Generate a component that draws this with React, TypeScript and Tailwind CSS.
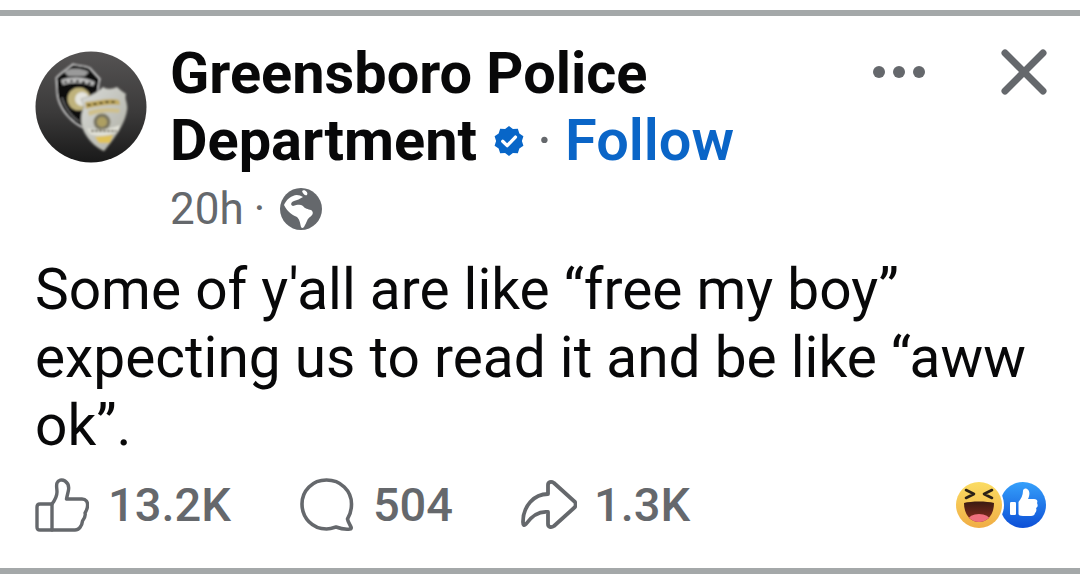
import React from 'react';

const GREY = '#65686c';

// Avatar art: two overlapping police badges on a dark disc
const Avatar = () => (
  <svg width="112" height="112" viewBox="0 0 112 112" className="shrink-0">
    <defs>
      <linearGradient id="disc" x1="0" y1="0" x2="0" y2="1">
        <stop offset="0" stopColor="#555353" />
        <stop offset="0.55" stopColor="#3b3a3a" />
        <stop offset="1" stopColor="#191919" />
      </linearGradient>
      <linearGradient id="silver" x1="0" y1="0" x2="1" y2="1">
        <stop offset="0" stopColor="#d9dbd8" />
        <stop offset="1" stopColor="#aeaea3" />
      </linearGradient>
      <filter id="soft">
        <feGaussianBlur stdDeviation="0.8" />
      </filter>
    </defs>
    <circle cx="56" cy="56" r="55.5" fill="url(#disc)" />
    <g filter="url(#soft)">
      <path d="M38 13 C43 15 50 14 55 17 L65 28 C63 34 64 38 62 44 L48 77 C38 72 27 62 23 48 C21 40 22 32 21 27 C25 22 32 18 38 13 Z" fill="#0a0a0a" stroke="#e6e6e6" strokeWidth="1.2" />
      <path d="M29 21 C36 16 46 17 54 21 L50 25 L33 25 Z" fill="#9a9a9a" />
      <path d="M26 29 C36 25 49 25 60 31 L58 35 C48 31 37 31 28 34 Z" fill="#bdbdbd" />
      <path d="M29 31 h3 M35 30 h3 M41 30 h3 M47 31 h3 M53 32 h3" stroke="#111" strokeWidth="2" />
      <circle cx="44" cy="48" r="11.5" fill="#bfb27c" />
      <circle cx="47" cy="48" r="7" fill="#e4e4de" />
      <path d="M27 47 C30 56 36 66 45 71" fill="none" stroke="#8d8d8d" strokeWidth="1.4" strokeDasharray="2 1" />
      <path d="M68 36 C72 39 78 38 82 36 C85 39 88 41 91 43 C89 48 93 52 92 59 C90 72 82 84 69 100 C60 96 52 88 48 78 C45 70 46 62 49 56 C48 52 47 50 46 48 C53 46 62 42 68 36 Z" fill="url(#silver)" stroke="#8f8f86" strokeWidth="0.6" />
      <path d="M50 51 C60 51 72 46 84 49 L85 54 C72 53 60 56 51 58 Z" fill="#c2ab62" />
      <path d="M52 54 h4 M58 53 h4 M64 52 h4 M70 51 h4 M76 51 h4" stroke="#4a3e1b" strokeWidth="1.8" />
      <path d="M53 60 C62 57 74 56 85 58 L84 62 C72 60 62 62 54 65 Z" fill="#cfc08c" />
      <circle cx="67" cy="71" r="8.5" fill="#7a7660" />
      <circle cx="67" cy="71" r="5" fill="#ad9f62" />
      <path d="M52 77 C60 80 74 79 85 74 L83 81 C74 85 62 86 55 83 Z" fill="#e2e2d8" />
      <path d="M56 80 h26" stroke="#4b4430" strokeWidth="1.6" strokeDasharray="3 1" />
      <path d="M60 86 L78 84 L75 92 L64 92 Z" fill="#e0c25a" />
    </g>
  </svg>
);

const Verified = () => (
  <svg width="36" height="36" viewBox="0 0 24 24" className="shrink-0">
    <path d="M12 2 L14.6 4 L17.9 3.9 L18.9 7 L21.6 8.9 L20.6 12 L21.6 15.1 L18.9 17 L17.9 20.1 L14.6 20 L12 22 L9.4 20 L6.1 20.1 L5.1 17 L2.4 15.1 L3.4 12 L2.4 8.9 L5.1 7 L6.1 3.9 L9.4 4 Z" fill="#0866c8" />
    <path d="M7.8 12.2 L10.8 15.1 L16.3 9.4" fill="none" stroke="#fff" strokeWidth="2.2" strokeLinecap="round" strokeLinejoin="round" />
  </svg>
);

const Globe = () => (
  <svg width="42" height="42" viewBox="0 0 42 42" className="shrink-0">
    <circle cx="21" cy="21" r="21" fill={GREY} />
    <path d="M4 17 C6 13 8 10 13 8 C16 6 20 7 23 9 C20 11 17 12 14 13 C11 14 10 17 13 18 C17 17 20 16 23 18 C25 21 28 21 31 22 C34 24 33 27 30 29 C27 31 27 34 25 37 C24 40 22 41 21 39 C20 35 20 32 17 29 C13 27 8 25 4 17 Z" fill="#fff" />
    <path d="M24 2 C27 3 28 5 27 7 C25 8 23 6 22 3 Z" fill="#fff" />
  </svg>
);

const LikeOutline = () => (
  <svg width="54" height="54" viewBox="0 0 54 54" fill="none" stroke={GREY} strokeWidth="3.4" strokeLinejoin="round" strokeLinecap="round" className="shrink-0">
    <path d="M2 29 Q2 26 5 26 H17 V52 H5 Q2 52 2 49 Z" />
    <path d="M17 26 C20 22 22 18 22 14 C22 10 21 8 22 5 C23 2 27 1 30 3 C33 5 34 9 33.5 12 C33 15 32 18 31.5 21 H47 C51 21 53 24 52.5 28 C52.5 31 51 33 50 35 C51 38 49 41 47.5 43 C47 48 44 52 40 52 H17" />
  </svg>
);

const CommentOutline = () => (
  <svg width="54" height="54" viewBox="0 0 54 54" fill="none" stroke={GREY} strokeWidth="3.6" strokeLinejoin="round" className="shrink-0">
    <path d="M26.5 2 C12.5 2 2 12.5 2 26 C2 40 12.5 51 26.5 51 C30 51 33 50 36 49 C40 50.5 46 51.5 50 51 C51 51 51.5 50 51 49 C50 47 48 44 47.5 41 C50 37 51.5 32 51.5 26 C51.5 12.5 40.5 2 26.5 2 Z" />
  </svg>
);

const ShareOutline = () => (
  <svg width="56" height="50" viewBox="0 0 56 50" fill="none" stroke={GREY} strokeWidth="3.8" strokeLinejoin="round" strokeLinecap="round" className="shrink-0">
    <path d="M27 5 C27 2 30 1 33 3 L54 22 C55 24 55 25 54 27 L33 46 C30 48 27 47 27 44 V32 C18 31 10 37 5 44 C3 46 2 45 2 42 C2 26 13 14 27 14 Z" />
  </svg>
);

const Reactions = () => (
  <svg width="90" height="46" viewBox="0 0 90 46" className="shrink-0">
    <defs>
      <linearGradient id="haha" x1="0" y1="0" x2="0" y2="1">
        <stop offset="0" stopColor="#fbdc62" />
        <stop offset="1" stopColor="#f0ad45" />
      </linearGradient>
      <linearGradient id="mouth" x1="0" y1="0" x2="0" y2="1">
        <stop offset="0" stopColor="#3a1a12" />
        <stop offset="1" stopColor="#8a2d1e" />
      </linearGradient>
      <linearGradient id="like" x1="0" y1="0" x2="0" y2="1">
        <stop offset="0" stopColor="#35a0fb" />
        <stop offset="1" stopColor="#0d4fd6" />
      </linearGradient>
      <clipPath id="mouthClip">
        <path d="M8 21 C15 19 31 19 38 21 C38 32 32 40 23 40 C14 40 8 32 8 21 Z" />
      </clipPath>
    </defs>
    <circle cx="67" cy="23" r="23" fill="url(#like)" />
    <circle cx="23" cy="23" r="25" fill="#fff" />
    <circle cx="23" cy="23" r="23" fill="url(#haha)" />
    <path d="M8 21 C15 19 31 19 38 21 C38 32 32 40 23 40 C14 40 8 32 8 21 Z" fill="url(#mouth)" />
    <g clipPath="url(#mouthClip)">
      <ellipse cx="23" cy="38" rx="11" ry="6" fill="#ee6f7d" />
    </g>
    <path d="M10 8 L18 12 L10 16 M36 8 L28 12 L36 16" fill="none" stroke="#2b2117" strokeWidth="2.6" strokeLinecap="round" strokeLinejoin="round" />
    <rect x="54" y="20" width="6" height="13" rx="1.2" fill="#fff" />
    <path d="M62.5 20 C65 17 67 13 67 9 C67 7 69 6 71 7 C74 8 74 13 72 17 H78 C81 17 82 19 81 21 C82 23 82 25 80 26 C81 28 80 30 79 31 C79 33 77 34 75 34 H67 C64 34 62.5 33 62.5 32 Z" fill="#fff" />
  </svg>
);

export default function App() {
  return (
    <div className="flex h-[577px] w-[1080px] flex-col overflow-hidden bg-white pt-[10px] pb-[3px] font-['Roboto',sans-serif]">
      <div className="h-[6px] bg-[#a4a8a9]" />

      <div className="flex flex-1 flex-col px-[35px]">
        <header className="flex items-start pt-[35px]">
          <Avatar />
          <div className="ml-[23px] flex-1 -mt-[12px]">
            <h1 className="text-[57.7px] leading-[68px] font-bold text-[#080809]">Greensboro Police</h1>
            <div className="flex items-center text-[57.7px] leading-[67px] font-bold text-[#080809]">
              <span>Department</span>
              <span className="ml-[14px]"><Verified /></span>
              <span className="ml-[10px] font-normal text-[#65686c]">·</span>
              <span className="ml-[13px] font-semibold text-[#0a65c7]">Follow</span>
            </div>
            <div className="mt-[10px] flex items-center text-[44px] leading-[50px] text-[#65686c]">
              <span>20h</span>
              <span className="ml-[10px]">·</span>
              <span className="ml-[15px]"><Globe /></span>
            </div>
          </div>
          <div className="-mt-[2px] -mr-[2px] flex items-center gap-[76px]">
            <svg width="52" height="12" viewBox="0 0 52 12" fill={GREY} className="shrink-0">
              <circle cx="6" cy="6" r="6" />
              <circle cx="26" cy="6" r="6" />
              <circle cx="46" cy="6" r="6" />
            </svg>
            <svg width="46" height="46" viewBox="0 0 46 46" fill="none" stroke={GREY} strokeWidth="7" strokeLinecap="round" className="shrink-0">
              <path d="M4 4 L42 42 M42 4 L4 42" />
            </svg>
          </div>
        </header>

        <p className="mt-[22px] text-[56.8px] leading-[68px] text-[#080809]">
          Some of y'all are like “free my boy”
          <br />
          expecting us to read it and be like “aww
          <br />
          ok”.
        </p>

        <footer className="mt-[18px] flex items-center text-[47px] leading-[54px] font-medium text-[#65686c]">
          <LikeOutline />
          <span className="ml-[19px]">13.2K</span>
          <span className="ml-[69px]"><CommentOutline /></span>
          <span className="ml-[19px]">504</span>
          <span className="ml-[68px]"><ShareOutline /></span>
          <span className="ml-[17px]">1.3K</span>
          <span className="ml-auto -mr-[1px]"><Reactions /></span>
        </footer>
      </div>

      <div className="h-[6px] bg-[#a4a8a9]" />
    </div>
  );
}
